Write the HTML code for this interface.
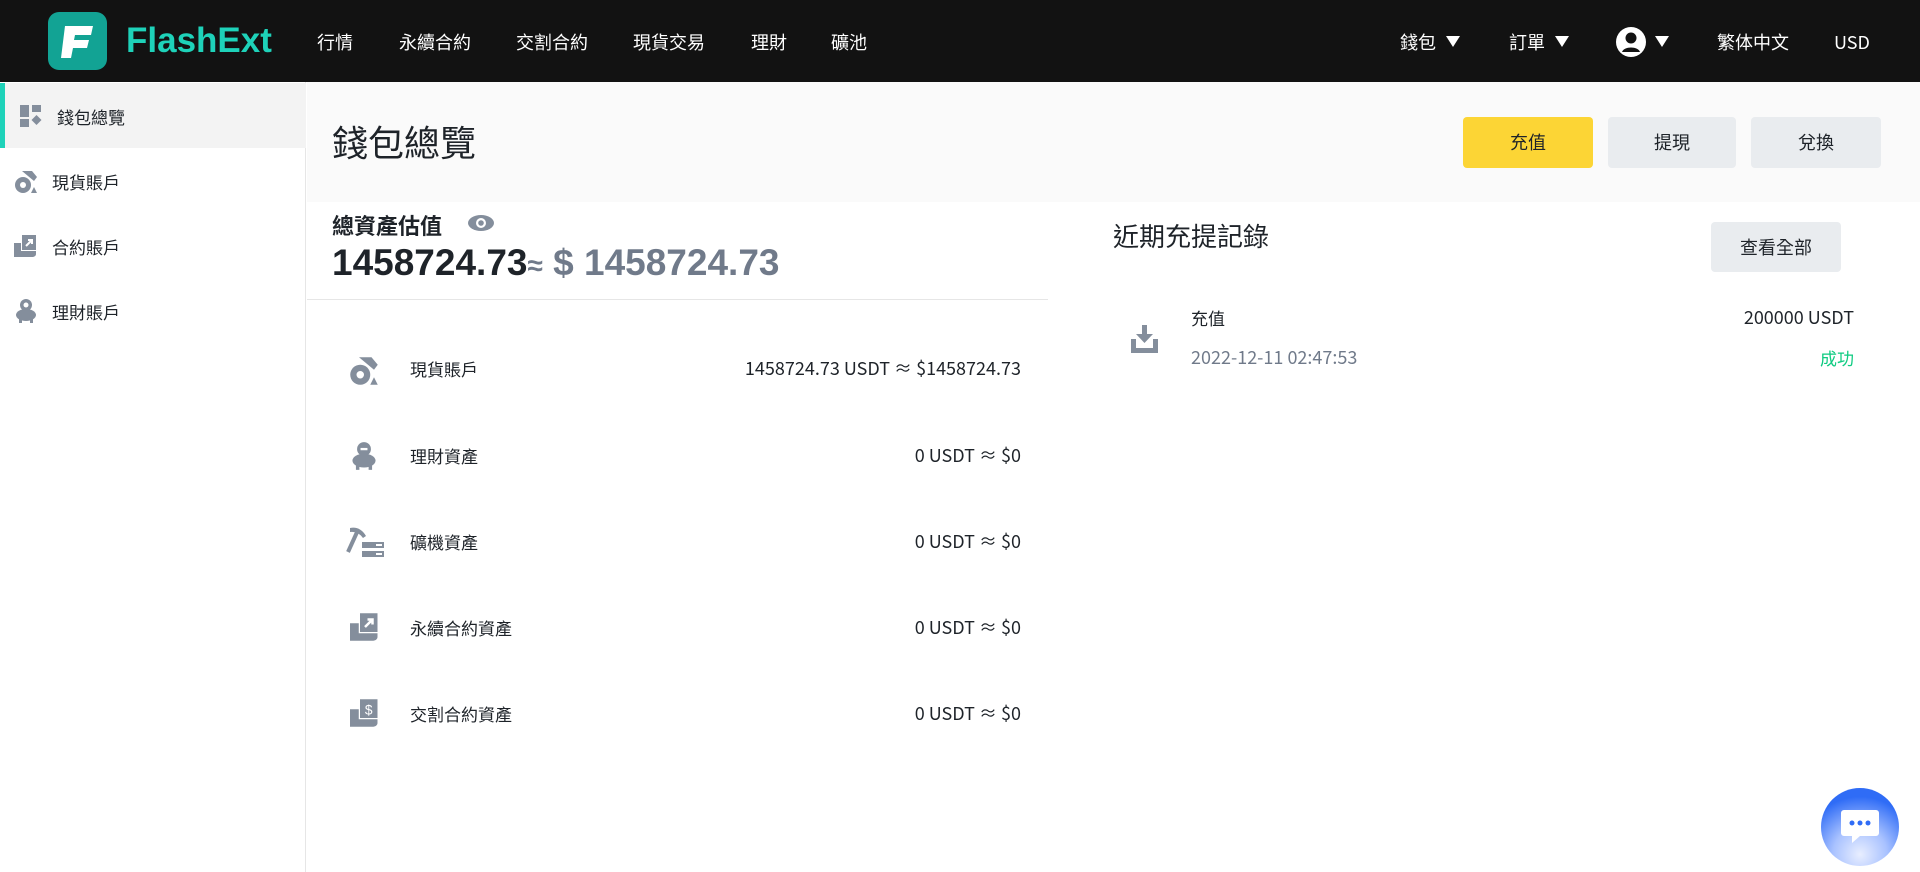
<!DOCTYPE html>
<html><head><meta charset="utf-8"><style>
*{margin:0;padding:0;box-sizing:border-box}
body{width:1920px;height:872px;overflow:hidden;background:#fff;font-family:"Noto Sans CJK TC","Liberation Sans",sans-serif;color:#1e2329;position:relative;line-height:1.25}
.a{position:absolute;white-space:nowrap}
.hdr{position:absolute;left:0;top:0;width:1920px;height:82px;background:#121212}
.nav{color:#fff;font-size:18px;top:31px}
.tri{display:inline-block;width:0;height:0;border-left:7px solid transparent;border-right:7px solid transparent;border-top:11px solid #fff;margin-left:10px;vertical-align:2px}
.side{position:absolute;left:0;top:82px;width:306px;height:790px;border-right:1px solid #e6e6e6}
.si{font-size:17px;color:#1e2329}
.btn{position:absolute;border-radius:4px;font-size:18px;text-align:center}
.row{font-size:17px}
.amt{font-size:18px}
.ic{position:absolute}
</style></head><body>
<div class="hdr"></div>
<svg class="ic" style="left:48px;top:12px" width="59" height="58" viewBox="0 0 59 58"><rect width="59" height="58" rx="11" fill="#12a394"/><path d="M17 14h28l-2 9H27l-1 5h15l-2 8H25l-2 10H13z" fill="#fff"/></svg>
<div class="a" style="left:126px;top:19px;font-size:35px;font-weight:bold;color:#1ed2b9;font-family:'Liberation Sans',sans-serif">FlashExt</div>
<div class="a nav" style="left:317px">行情</div>
<div class="a nav" style="left:399px">永續合約</div>
<div class="a nav" style="left:516px">交割合約</div>
<div class="a nav" style="left:633px">現貨交易</div>
<div class="a nav" style="left:751px">理財</div>
<div class="a nav" style="left:831px">礦池</div>
<div class="a nav" style="left:1400px">錢包<span class="tri"></span></div>
<div class="a nav" style="left:1509px">訂單<span class="tri"></span></div>
<svg class="ic" style="left:1616px;top:27px" width="30" height="30" viewBox="0 0 30 30"><circle cx="15" cy="15" r="15" fill="#fff"/><circle cx="15" cy="11" r="5.5" fill="#121212"/><path d="M6 25c2-6 16-6 18 0z" fill="#121212"/></svg>
<div class="a nav" style="left:1655px"><span class="tri" style="margin-left:0"></span></div>
<div class="a nav" style="left:1717px">繁体中文</div>
<div class="a nav" style="left:1834px">USD</div>

<div class="side"></div>
<div class="a" style="left:0;top:83px;width:306px;height:65px;background:#f3f3f3;border-left:5px solid #1ed2b9"></div>
<svg class="ic" style="left:20px;top:105px" width="22" height="22" viewBox="0 0 22 22" fill="#848e9c"><rect x="0" y="0" width="9" height="12"/><rect x="12" y="0" width="9" height="7"/><rect x="0" y="14" width="9" height="8"/><path d="M16.5 10l5 5-5 5-5-5z"/></svg>
<div class="a si" style="left:57px;top:106px">錢包總覽</div>
<svg class="ic" style="left:14px;top:170px" width="24" height="24" viewBox="0 0 24 24" fill="#848e9c"><circle cx="9" cy="15" r="8"/><circle cx="9" cy="15" r="3" fill="#fff"/><path d="M8 1h10l5 6-3 4z"/><path d="M20 17l3 6h-6z"/></svg>
<div class="a si" style="left:52px;top:171px">現貨賬戶</div>
<svg class="ic" style="left:14px;top:234px" width="24" height="24" viewBox="0 0 24 24" fill="#848e9c"><rect x="8" y="1" width="14" height="15"/><path d="M0 9h7v8h15v3c0 2-2 3-4 3H0z"/><path d="M12 12l6-6M14 6h4v4" stroke="#fff" stroke-width="2" fill="none"/></svg>
<div class="a si" style="left:52px;top:236px">合約賬戶</div>
<svg class="ic" style="left:14px;top:298px" width="24" height="26" viewBox="0 0 24 26" fill="#848e9c"><circle cx="12" cy="7" r="6"/><circle cx="12" cy="7" r="2.5" fill="#fff"/><ellipse cx="12" cy="17" rx="10" ry="6"/><rect x="5" y="21" width="3" height="4"/><rect x="16" y="21" width="3" height="4"/></svg>
<div class="a si" style="left:52px;top:301px">理財賬戶</div>

<div class="a" style="left:307px;top:82px;width:1613px;height:120px;background:#fafafa"></div>
<div class="a" style="left:332px;top:119px;font-size:36px">錢包總覽</div>
<div class="btn" style="left:1463px;top:117px;width:130px;height:51px;background:#fcd535;line-height:51px">充值</div>
<div class="btn" style="left:1608px;top:117px;width:128px;height:51px;background:#e9ecef;line-height:51px">提現</div>
<div class="btn" style="left:1751px;top:117px;width:130px;height:51px;background:#e9ecef;line-height:51px">兌換</div>

<div class="a" style="left:332px;top:212px;font-size:22px;font-weight:bold">總資產估值</div>
<svg class="ic" style="left:467px;top:214px" width="28" height="18" viewBox="0 0 28 18"><ellipse cx="14" cy="9" rx="13" ry="8" fill="#848e9c"/><circle cx="14" cy="9" r="5" fill="#fff"/><circle cx="14" cy="9" r="2.8" fill="#848e9c"/></svg>
<div class="a" style="left:332px;top:240px;font-size:37px;font-weight:bold;font-family:'Liberation Sans',sans-serif">1458724.73<span style="color:#707a8a;font-size:28px">≈</span><span style="color:#707a8a"> $ 1458724.73</span></div>
<div class="a" style="left:307px;top:299px;width:741px;height:1px;background:#e6e6e6"></div>

<svg class="ic" style="left:349px;top:356px" width="30" height="30" viewBox="0 0 24 24" fill="#848e9c"><circle cx="9" cy="15" r="8"/><circle cx="9" cy="15" r="3" fill="#fff"/><path d="M8 1h10l5 6-3 4z"/><path d="M20 17l3 6h-6z"/></svg>
<div class="a row" style="left:410px;top:358px">現貨賬戶</div>
<div class="a amt" style="right:899px;top:357px">1458724.73 USDT ≈ $1458724.73</div>
<svg class="ic" style="left:350px;top:441px" width="28" height="30" viewBox="0 0 24 26" fill="#848e9c"><circle cx="12" cy="7" r="6"/><rect x="9" y="6" width="6" height="2" fill="#fff"/><ellipse cx="12" cy="17" rx="10" ry="6"/><rect x="5" y="21" width="3" height="4"/><rect x="16" y="21" width="3" height="4"/></svg>
<div class="a row" style="left:410px;top:445px">理財資產</div>
<div class="a amt" style="right:899px;top:444px">0 USDT ≈ $0</div>
<svg class="ic" style="left:346px;top:526px" width="40" height="32" viewBox="0 0 40 32" fill="#848e9c"><path d="M2 26L12 4" stroke="#848e9c" stroke-width="4"/><path d="M4 2q10-2 16 8l-3 2q-5-7-13-6z"/><rect x="16" y="16" width="22" height="6"/><rect x="16" y="25" width="22" height="6"/><rect x="30" y="18" width="6" height="2" fill="#fff"/><rect x="30" y="27" width="6" height="2" fill="#fff"/></svg>
<div class="a row" style="left:410px;top:531px">礦機資產</div>
<div class="a amt" style="right:899px;top:530px">0 USDT ≈ $0</div>
<svg class="ic" style="left:350px;top:612px" width="30" height="30" viewBox="0 0 24 24" fill="#848e9c"><rect x="8" y="1" width="14" height="15"/><path d="M0 9h7v8h15v3c0 2-2 3-4 3H0z"/><path d="M12 12l6-6M14 6h4v4" stroke="#fff" stroke-width="2" fill="none"/></svg>
<div class="a row" style="left:410px;top:617px">永續合約資產</div>
<div class="a amt" style="right:899px;top:616px">0 USDT ≈ $0</div>
<svg class="ic" style="left:350px;top:698px" width="30" height="30" viewBox="0 0 24 24" fill="#848e9c"><rect x="8" y="1" width="14" height="15"/><path d="M0 9h7v8h15v3c0 2-2 3-4 3H0z"/><text x="15" y="13" font-size="11" fill="#fff" text-anchor="middle" font-family="Liberation Sans">$</text></svg>
<div class="a row" style="left:410px;top:703px">交割合約資產</div>
<div class="a amt" style="right:899px;top:702px">0 USDT ≈ $0</div>

<div class="a" style="left:1113px;top:220px;font-size:26px">近期充提記錄</div>
<div class="btn" style="left:1711px;top:222px;width:130px;height:50px;background:#e9ecef;line-height:50px">查看全部</div>
<svg class="ic" style="left:1131px;top:325px" width="27" height="28" viewBox="0 0 27 28" fill="#848e9c"><rect x="11" y="0" width="5" height="10"/><path d="M5 9h17l-8.5 9z"/><path d="M0 14h5v9h17v-9h5v14H0z"/></svg>
<div class="a" style="left:1191px;top:307px;font-size:17px">充值</div>
<div class="a" style="left:1191px;top:346px;font-size:18px;color:#707a8a">2022-12-11 02:47:53</div>
<div class="a" style="right:66px;top:306px;font-size:18px">200000 USDT</div>
<div class="a" style="right:66px;top:347px;font-size:17px;color:#0ecb81">成功</div>

<div class="a" style="left:1821px;top:788px;width:78px;height:78px;border-radius:50%;background:radial-gradient(circle at 50% 85%,#e8eeff 0,#a9c2ff 35%,#2f6cf6 75%)"></div>
<svg class="ic" style="left:1840px;top:808px" width="40" height="36" viewBox="0 0 40 36"><path d="M4 2h32a3 3 0 0 1 3 3v20a3 3 0 0 1-3 3H20l-8 7v-7H4a3 3 0 0 1-3-3V5a3 3 0 0 1 3-3z" fill="#fff"/><circle cx="12" cy="15" r="2.5" fill="#2f6cf6"/><circle cx="20" cy="15" r="2.5" fill="#2f6cf6"/><circle cx="28" cy="15" r="2.5" fill="#2f6cf6"/></svg>
</body></html>
